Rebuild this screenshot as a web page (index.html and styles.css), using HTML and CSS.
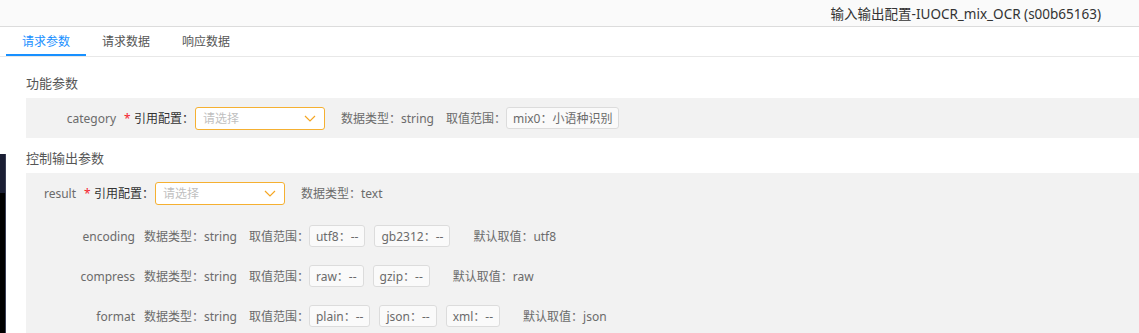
FILE: index.html
```html
<!DOCTYPE html>
<html lang="zh-CN">

<head>
    <meta charset="UTF-8">
    <title>输入输出配置</title>
    <link rel="stylesheet" href="styles.css">
</head>

<body>

    <div class="header">
        <span class="header-title">输入输出配置-IUOCR_mix_OCR (s00b65163)</span>
    </div>

    <div class="tabs">
        <div class="tab active">请求参数</div>
        <div class="tab">请求数据</div>
        <div class="tab">响应数据</div>
    </div>

    <div class="content">
        <div class="section-title">功能参数</div>
        <div class="panel">
            <div class="row">
                <span class="name name-wide">category</span>
                <span class="req">*</span>
                <span class="ref-label">引用配置：</span>
                <div class="select">
                    <span class="placeholder">请选择</span>
                    <svg class="arrow" width="12" height="7" viewBox="0 0 12 7"><polyline points="1,1 6,6 11,1" fill="none" stroke="#f5a623" stroke-width="1.2"/></svg>
                </div>
                <span class="info">数据类型：string</span>
                <span class="info range-label">取值范围：</span>
                <span class="tag">mix0：小语种识别</span>
            </div>
        </div>

        <div class="section-title second">控制输出参数</div>
        <div class="panel">
            <div class="row">
                <span class="name name-short">result</span>
                <span class="req">*</span>
                <span class="ref-label">引用配置：</span>
                <div class="select">
                    <span class="placeholder">请选择</span>
                    <svg class="arrow" width="12" height="7" viewBox="0 0 12 7"><polyline points="1,1 6,6 11,1" fill="none" stroke="#f5a623" stroke-width="1.2"/></svg>
                </div>
                <span class="info">数据类型：text</span>
            </div>

            <div class="sub-rows">
                <div class="row">
                    <span class="name name-sub">encoding</span>
                    <span class="info">数据类型：string</span>
                    <span class="info range-label">取值范围：</span>
                    <span class="tag">utf8：--</span>
                    <span class="tag">gb2312：--</span>
                    <span class="info default">默认取值：utf8</span>
                </div>
                <div class="row">
                    <span class="name name-sub">compress</span>
                    <span class="info">数据类型：string</span>
                    <span class="info range-label">取值范围：</span>
                    <span class="tag">raw：--</span>
                    <span class="tag">gzip：--</span>
                    <span class="info default">默认取值：raw</span>
                </div>
                <div class="row">
                    <span class="name name-sub">format</span>
                    <span class="info">数据类型：string</span>
                    <span class="info range-label">取值范围：</span>
                    <span class="tag">plain：--</span>
                    <span class="tag">json：--</span>
                    <span class="tag">xml：--</span>
                    <span class="info default">默认取值：json</span>
                </div>
            </div>
        </div>
    </div>

    <!-- edge of the window behind -->
    <div class="edge"></div>

</body>

</html>
```

FILE: styles.css
```css
body {
    margin: 0;
    background-color: #fff;
    font-family: "Noto Sans", "Noto Sans CJK SC", sans-serif;
    font-size: 12px;
    color: #666;
    overflow: hidden;
}

.header {
    height: 26px;
    background-color: #fafafa;
    border-bottom: 1px solid #dcdcdc;
    display: flex;
    justify-content: flex-end;
    align-items: center;
    padding-right: 38px;
}

.header-title {
    font-size: 13.5px;
    color: #333;
}

.tabs {
    display: flex;
    height: 29px;
    padding-left: 6px;
    border-bottom: 1px solid #e8e8e8;
}

.tab {
    width: 80px;
    box-sizing: border-box;
    display: flex;
    justify-content: center;
    align-items: center;
    color: #555;
    border-bottom: 2px solid transparent;
}

.tab.active {
    color: #1890ff;
    border-bottom-color: #1890ff;
}

.content {
    padding: 16px 0 0 26px;
}

.section-title {
    font-size: 13px;
    line-height: 20px;
    color: #555;
    margin-bottom: 5px;
}

.section-title.second {
    margin-top: 10px;
}

.panel {
    background-color: #f2f2f2;
}

.row {
    display: flex;
    align-items: center;
    height: 40px;
    white-space: nowrap;
}

.name {
    text-align: right;
    box-sizing: border-box;
    color: #6b6b6b;
}

.name-wide {
    width: 90px;
    margin-right: 8px;
}

.name-short {
    width: 50px;
    margin-right: 8px;
}

.name-sub {
    width: 109px;
    margin-right: 9px;
}

.req {
    color: #f5222d;
    width: 6px;
    margin-right: 4px;
}

.ref-label {
    color: #333;
    width: 61px;
}

.select {
    width: 130px;
    height: 23px;
    box-sizing: border-box;
    border: 1px solid #f5b031;
    border-radius: 3px;
    background-color: #fff;
    display: flex;
    align-items: center;
    justify-content: space-between;
    padding: 0 8px 0 7px;
    margin-right: 16px;
}

.placeholder {
    color: #bfbfbf;
}

.arrow {
    display: block;
}

.info {
    color: #6b6b6b;
}

.range-label {
    margin-left: 12px;
}

.tag {
    height: 22px;
    box-sizing: border-box;
    border: 1px solid #dcdcdc;
    border-radius: 3px;
    background-color: #fafafa;
    padding: 0 6px;
    display: flex;
    align-items: center;
    color: #6b6b6b;
    margin-right: 9px;
}

.default {
    margin-left: 14px;
}

.sub-rows {
    margin-top: 3px;
}

.edge {
    position: absolute;
    left: 0;
    top: 154px;
    width: 6px;
    height: 179px;
    background: linear-gradient(#1a1e33 0, #1a1e33 39px, #000 39px);
    box-shadow: inset -1px 0 0 #3a3f55;
}
```
